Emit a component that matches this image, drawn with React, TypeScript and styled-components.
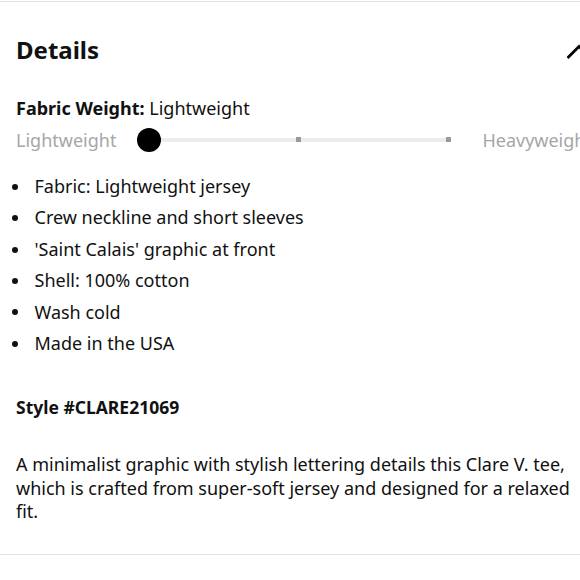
import styled, { createGlobalStyle } from "styled-components";

const GlobalStyle = createGlobalStyle`
    html, body {
        margin: 0;
        padding: 0;
        background: #ffffff;
        overflow: hidden;
    }
    body {
        font-family: "Noto Sans", "Liberation Sans", Arial, sans-serif;
        color: #111111;
    }
`;

export const Panel = styled.section`
    width: 600px;
    margin-top: 1px;
    border-top: 1px solid #e6e2de;
    border-bottom: 1px solid #e6e2de;
    padding: 30px 0 30px 16px;
    box-sizing: border-box;
`;

export const Header = styled.div`
    display: flex;
    justify-content: space-between;
    align-items: center;
    height: 36px;
    padding-right: 9px;
`;

export const Title = styled.h2`
    margin: 0;
    font-size: 24px;
    line-height: 36px;
    font-weight: 700;
`;

export const Chevron = styled.svg`
    width: 24px;
    height: 24px;
    display: block;
`;

export const WeightLabel = styled.p`
    margin: 28px 0 0;
    font-size: 18px;
    line-height: 24px;
`;

export const Strong = styled.strong`
    font-weight: 700;
`;

export const SliderRow = styled.div`
    display: flex;
    align-items: center;
    height: 28px;
    margin-top: 6px;
`;

export const EndLabel = styled.span`
    font-size: 18px;
    line-height: 28px;
    color: #a6a6a6;
    white-space: nowrap;
`;

export const Track = styled.div`
    position: relative;
    flex: 0 0 324px;
    height: 24px;
    margin: 0 21px;
`;

export const Rail = styled.div`
    position: absolute;
    left: 12px;
    right: 12px;
    top: 10px;
    height: 4px;
    background: #ececec;
`;

export const Tick = styled.span<{ $pos: number }>`
    position: absolute;
    top: 9px;
    left: calc(12px + (100% - 24px) * ${({ $pos }) => $pos});
    width: 5px;
    height: 5px;
    margin-left: -3px;
    background: #9a9a9a;
`;

export const Knob = styled.span`
    position: absolute;
    left: 0;
    top: 0;
    width: 24px;
    height: 24px;
    border-radius: 50%;
    background: #000000;
`;

export const FeatureList = styled.ul`
    margin: 17px 0 0 -4px;
    padding: 0;
    list-style: none;
`;

export const Feature = styled.li`
    display: flex;
    align-items: center;
    font-size: 18px;
    line-height: 31.4px;

    &::before {
        content: "";
        flex: 0 0 6px;
        height: 6px;
        margin-right: 16.5px;
        border-radius: 50%;
        background: #111111;
    }
`;

export const StyleNo = styled.p`
    margin: 36px 0 0;
    font-size: 17.5px;
    line-height: 24px;
    font-weight: 700;
`;

export const Description = styled.p`
    margin: 34px 0 0;
    width: 560px;
    font-size: 18px;
    line-height: 23.5px;
`;

const features = [
    "Fabric: Lightweight jersey",
    "Crew neckline and short sleeves",
    "'Saint Calais' graphic at front",
    "Shell: 100% cotton",
    "Wash cold",
    "Made in the USA",
];

export default function App() {
    return (
        <>
            <GlobalStyle />
            <Panel>
                <Header>
                    <Title>Details</Title>
                    <Chevron viewBox="0 0 24 24" fill="none" stroke="#000" strokeWidth="2.8" strokeLinecap="square">
                        <polyline points="1.5,19 12,8.5 22.5,19" />
                    </Chevron>
                </Header>
                <WeightLabel>
                    <Strong>Fabric Weight:</Strong> Lightweight
                </WeightLabel>
                <SliderRow>
                    <EndLabel>Lightweight</EndLabel>
                    <Track>
                        <Rail />
                        <Tick $pos={0.5} />
                        <Tick $pos={1} />
                        <Knob />
                    </Track>
                    <EndLabel>Heavyweight</EndLabel>
                </SliderRow>
                <FeatureList>
                    {features.map((f) => (
                        <Feature key={f}>{f}</Feature>
                    ))}
                </FeatureList>
                <StyleNo>Style #CLARE21069</StyleNo>
                <Description>
                    A minimalist graphic with stylish lettering details this Clare V. tee, which is crafted from
                    super-soft jersey and designed for a relaxed fit.
                </Description>
            </Panel>
        </>
    );
}
